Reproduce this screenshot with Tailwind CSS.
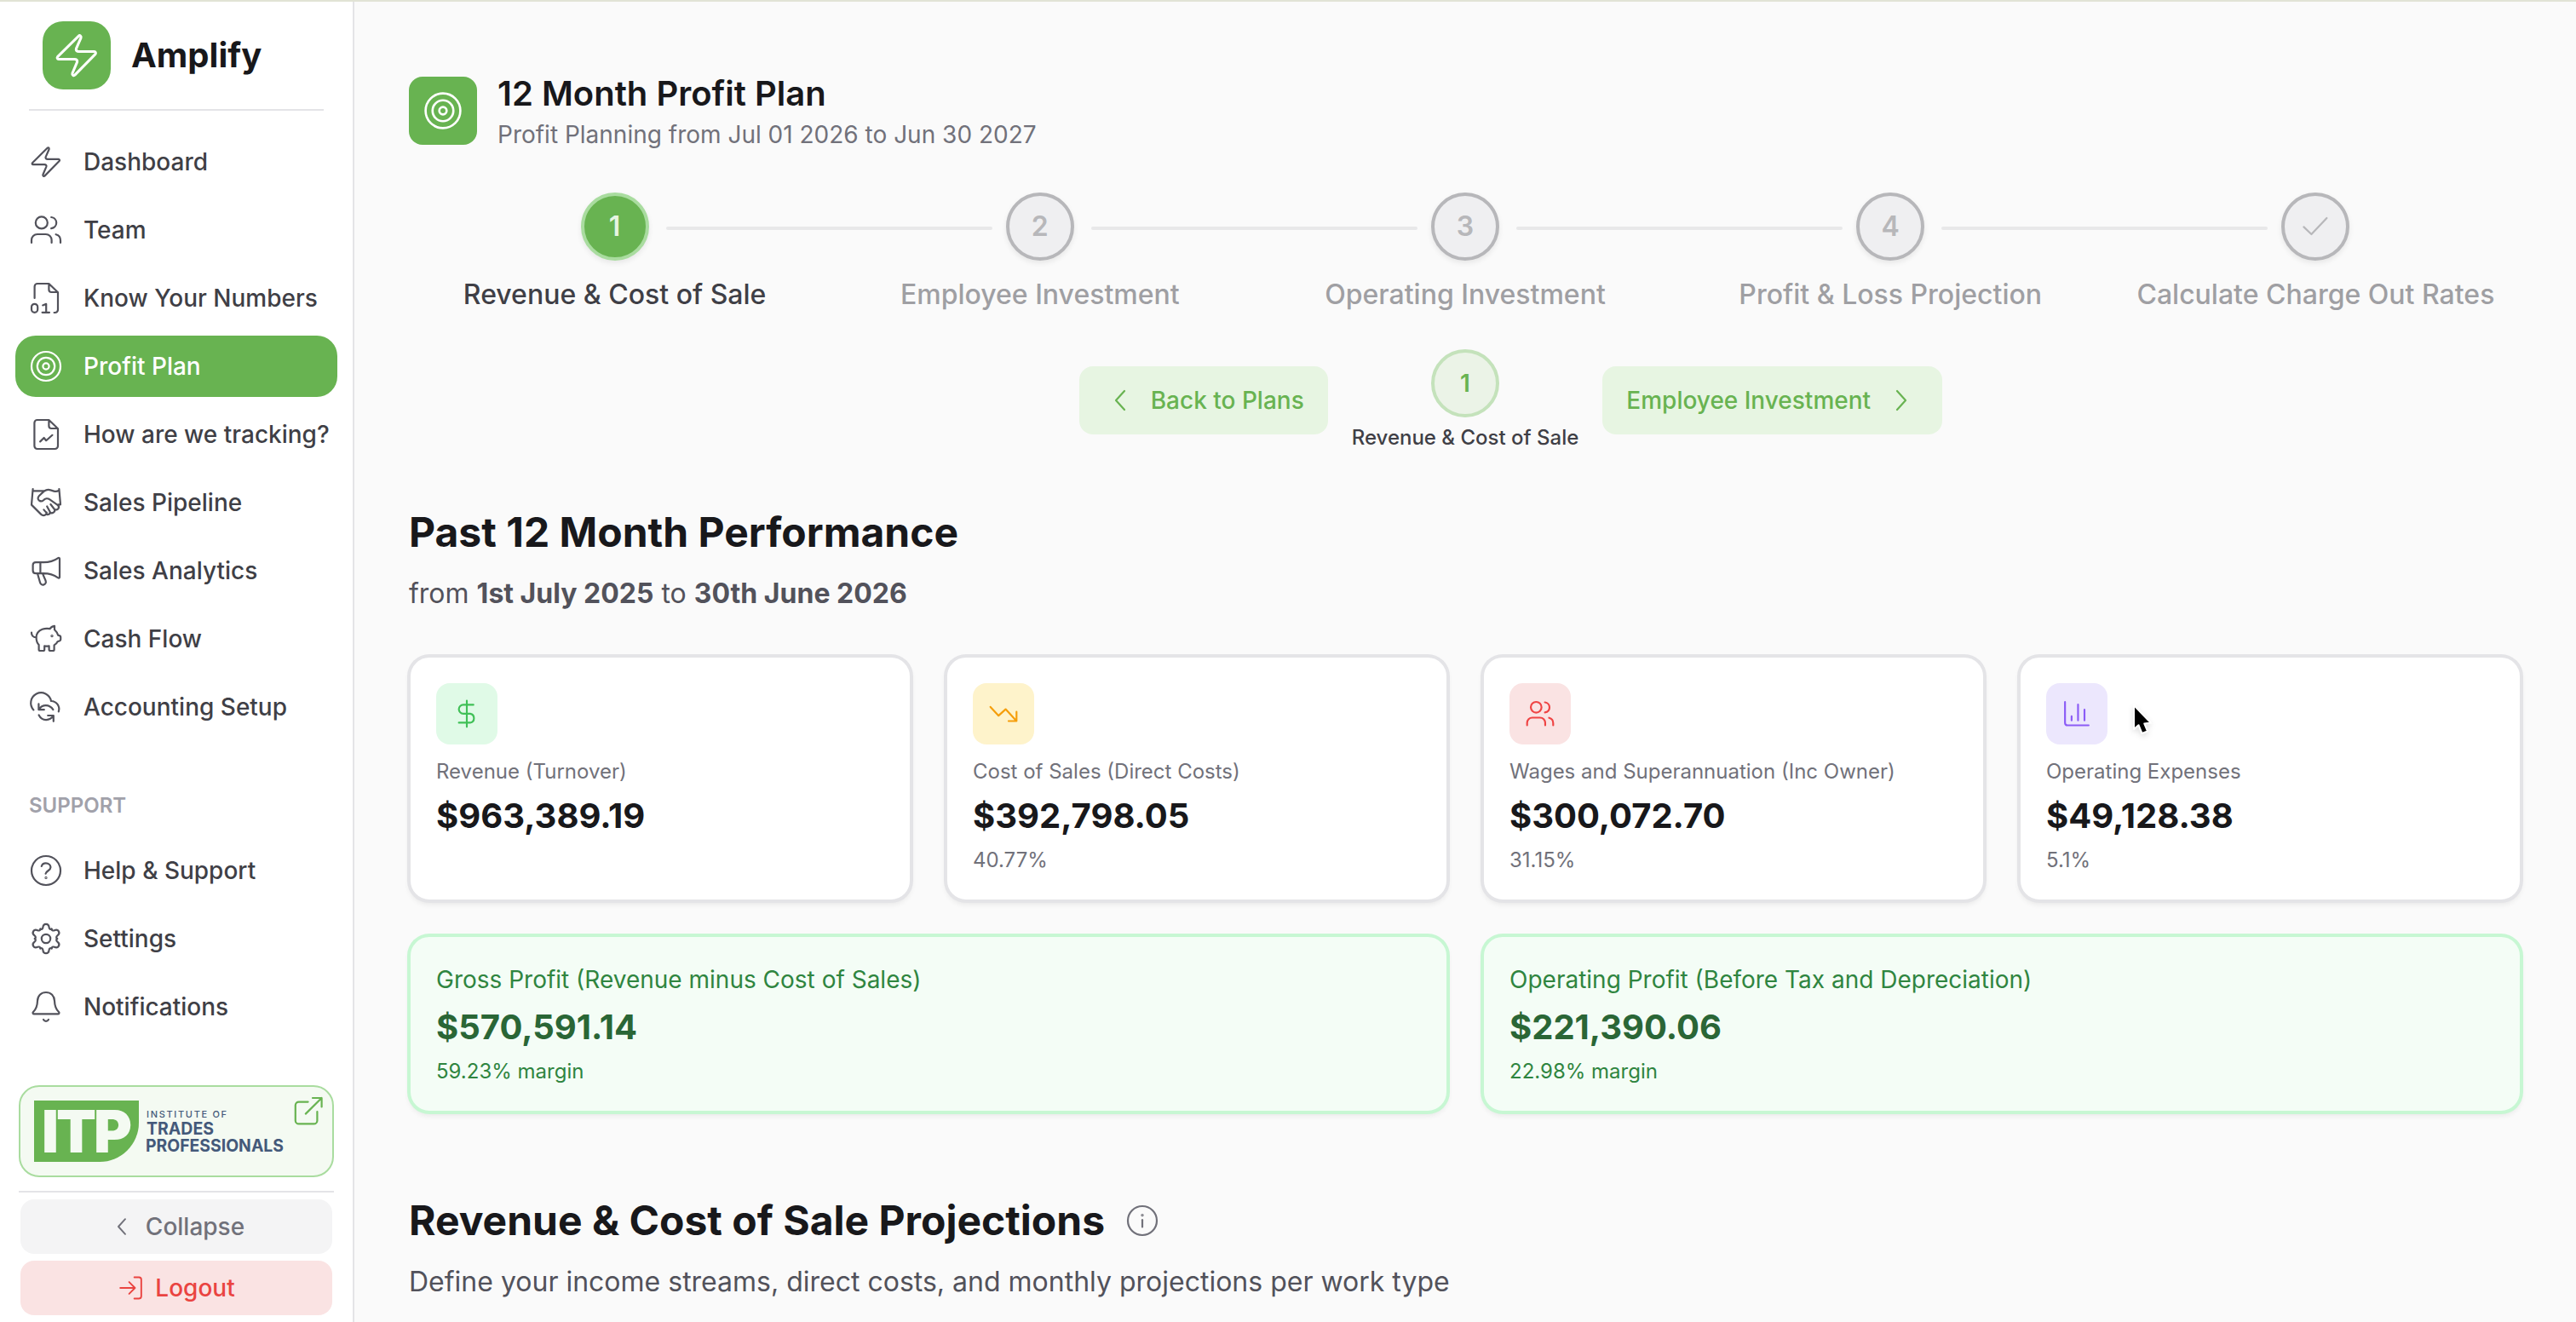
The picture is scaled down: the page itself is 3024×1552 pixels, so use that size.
<!DOCTYPE html>
<html lang="en">
<head>
    <meta charset="UTF-8">
    <meta name="viewport" content="width=device-width, initial-scale=1.0">
    <title>Amplify - 12 Month Profit Plan</title>
    <script src="https://cdn.jsdelivr.net/npm/@tailwindcss/browser@4"></script>
</head>
<body class="bg-[#fafafa] font-[Inter,sans-serif] text-[#18181b] w-[3024px] h-[1552px] overflow-hidden border-t-2 border-[#e1e3d5] flex">

    <!-- Icon sprite -->
    <svg class="hidden">
        <symbol id="bolt" viewBox="0 0 20 20"><path d="M10.8 1.9 2 10.6c-.35.4-.1 1 .4 1h6.7c.8 0 1.3.5 1.1 1.2L8.2 17.5c-.2.8.6 1.2 1.1.7l8.500-8.700c.4-.4.1-1.1-.4-1.1h-6.500c-.8 0-1.3-.5-1.100-1.200l2-4.600c.2-.8-.5-1.200-1-.7z"/></symbol>
        <symbol id="users" viewBox="0 0 20 20"><circle cx="7.4" cy="5.7" r="3.5"/><path d="M13.1 2.5c1.7.2 3 1.6 3 3.3S14.800 8.800 13.100 9.100M1.500 17.500v-1.600c0-1.900 1.500-3.400 3.400-3.400h5c1.900 0 3.400 1.500 3.400 3.400v1.600M15.800 12.600c1.600.4 2.700 1.800 2.700 3.500v1.400"/></symbol>
        <symbol id="file-digit" viewBox="0 0 20 20"><path d="M3.300 10V3.200c0-.9.7-1.700 1.700-1.700h6.700L17 6.600v10.200c0 .9-.7 1.700-1.700 1.700h-.5M11.700 1.500v3.500c0 .9.700 1.500 1.500 1.500H17M8.100 14.200l2-.8v5M7.800 18.400h4.200"/><rect x="1.500" y="13.400" width="3.600" height="5" rx="1.800"/></symbol>
        <symbol id="target" viewBox="0 0 20 20"><circle cx="10" cy="10" r="8.500"/><circle cx="10" cy="10" r="5.100"/><circle cx="10" cy="10" r="1.800"/></symbol>
        <symbol id="file-chart" viewBox="0 0 20 20"><path d="M3.200 3.200c0-.9.7-1.700 1.700-1.700h6.800L17 6.600v10.200c0 .9-.8 1.700-1.700 1.700H4.900c-1 0-1.700-.8-1.700-1.700zM11.700 1.500v3.500c0 .9.700 1.500 1.500 1.500H17M6.600 14.200l2.200-2.200 1.300 1.600 3.600-3.200"/></symbol>
        <symbol id="handshake" viewBox="0 0 20 20"><path d="M2.300 2l-.8 9.300 5.500 5.500c1 1 2.200 1 3 .1.300-.3.400-.7.400-1.100M17.700 2l.8 9.200h-1.300M2.400 3.200h6.500M17.600 2.800c-.9.700-2 .8-3 .5l-1.900-.6c-1.300-.5-2.700-.2-3.800.6L6 6c-1 1-.9 2.300.1 2.900.8.5 1.700.4 2.400-.3.9-1 2.500-1.200 3.700-.4l4.600 3.200c.8.6.9 1.500.4 2.200-.5.700-1.500.8-2.200.3.300.8 0 1.500-.6 1.900-.7.500-1.500.4-2.100-.1 0 .7-.5 1.200-1.100 1.300-.4.100-.8-.1-1-.3M8.700 14.200l1.700 2M10.600 12.200l1.900 3.500M12.700 11l2.300 3"/></symbol>
        <symbol id="megaphone" viewBox="0 0 20 20"><path d="M18 3v10.700c0 .5-.5.800-.9.500-2.600-1.800-5-2.600-8.600-2.600H4c-1 0-1.700-.7-1.700-1.700V6.800c0-1 .7-1.700 1.700-1.700h4.500c3.600 0 6-.6 8.600-2.500.4-.3.9 0 .9.400zM6.700 5.100v6.500M5 11.600l1.500 5.300c.3 1 1.200 1.600 2.200 1.300 1-.3 1.500-1.300 1.100-2.300L8 11.700"/></symbol>
        <symbol id="piggy" viewBox="0 0 20 20"><path d="M15 2.400c-1.300.2-2.200.8-2.700 1.700-1-.2-3.100-.2-4.500.3-2.100.8-3.500 2.600-3.500 4.900 0 1.900.5 3.200 1.500 4.200v2.700c0 .5.300.8.800.8h1.700c.5 0 .8-.3.800-.8v-2c.9.200 1.800.2 2.700 0v2c0 .5.300.8.800.8H14c.5 0 .8-.3.800-.8v-2.500c1-.6 1.700-1.300 2-2.100l1.300-.5c.3-.1.500-.4.500-.7V8.900c0-.3-.2-.6-.5-.7l-1-.3c-.2-1-.8-2.100-2.100-3.300zM1.500 6.300c-.1 1.500.9 2.900 2.700 2.900"/><circle cx="13.500" cy="8.300" r=".3"/></symbol>
        <symbol id="cloud-sync" viewBox="0 0 20 20"><path d="M2.700 11.700A6 6 0 1 1 13 6.500a4.700 4.700 0 0 1 4.400 6.200M5.700 8.200v3.400h3.200M5.800 11.500c2-3.200 6.200-3.300 8.400.1M14.400 18.400V15h-3.300M14.300 15.100c-2.100 3.300-6.600 3.300-8.500-.4"/></symbol>
        <symbol id="help" viewBox="0 0 20 20"><circle cx="10" cy="10" r="8.500"/><path d="M7.400 7.500c.3-1.100 1.300-1.800 2.500-1.800 1.600 0 2.800 1 2.800 2.400 0 1.900-2.600 2-2.900 3.700"/><circle cx="10" cy="14.200" r=".25"/></symbol>
        <symbol id="gear" viewBox="-10 -10 20 20">
            <g id="tooth"><path d="M-3.300-5.700C-2.500-5.300-1.900-5.800-1.800-6.700c.1-1.100.8-1.900 1.800-1.900s1.700.8 1.800 1.900c.1.900.7 1.400 1.500 1"/></g>
            <use href="#tooth" transform="rotate(60)"/><use href="#tooth" transform="rotate(120)"/><use href="#tooth" transform="rotate(180)"/><use href="#tooth" transform="rotate(240)"/><use href="#tooth" transform="rotate(300)"/>
            <circle r="2.600"/>
        </symbol>
        <symbol id="bell" viewBox="0 0 20 20"><path d="M10 1.500c-2.900 0-4.900 2.100-5 5-.1 3.300-.7 4.800-2.500 6.500-.5.500-.2 1.200.5 1.200h14c.7 0 1-.7.500-1.200-1.800-1.700-2.400-3.200-2.500-6.500-.1-2.900-2.100-5-5-5zM8.500 17.500c.7 1.200 2.300 1.200 3 0"/></symbol>
        <symbol id="external" viewBox="0 0 20 20"><path d="M9.800 4.800H4.400c-1.100 0-2 .9-2 2v8.900c0 1.100.9 2 2 2h8.800c1.100 0 2-.9 2-2v-5.200M8.400 11.800l9.400-9.300M12.500 2.500h5.300v5.200"/></symbol>
        <symbol id="chevron-left" viewBox="0 0 20 20"><path d="M12.500 4.500 7.500 10l5 5.500"/></symbol>
        <symbol id="chevron-right" viewBox="0 0 20 20"><path d="M7.500 4.500l5 5.500-5 5.500"/></symbol>
        <symbol id="login" viewBox="0 0 20 20"><path d="M2 10h10.600M8.500 5.700l4.300 4.300-4.300 4.300M12.300 2.200h3.400c1 0 1.700.7 1.700 1.700v12.200c0 1-.7 1.700-1.700 1.700h-3.400"/></symbol>
        <symbol id="check" viewBox="0 0 20 20"><path d="M3.200 10.200l4.500 4.300 9-9.500"/></symbol>
        <symbol id="dollar" viewBox="0 0 20 20"><path d="M14.300 4.100H7.700a2.900 2.900 0 0 0 0 5.800h4.500a3 3 0 0 1 0 5.900H4.800M10 1.500v17"/></symbol>
        <symbol id="trend-down" viewBox="0 0 20 20"><path d="M1.500 5.500l5.300 5.700 4.600-4.200 7.100 7.700M13.300 14.700h5.200v-6"/></symbol>
        <symbol id="chart" viewBox="0 0 20 20"><path d="M2.300 2.300v13.500c0 1 .7 1.700 1.700 1.700h13.700M6.600 11.600v2.700M10.800 4v10.300M15 7.300v7"/></symbol>
        <symbol id="info" viewBox="0 0 20 20"><circle cx="10" cy="10" r="8.500"/><path d="M10 9.600v4.100"/><circle cx="10" cy="6.800" r=".3"/></symbol>
    </svg>

    <!-- Sidebar -->
    <aside class="w-[416px] shrink-0 h-full bg-white border-r-2 border-[#e4e4e7] flex flex-col">
        <div class="ml-[34px] w-[346px] h-[128px] border-b-2 border-[#e4e4e7] pl-4 pt-[23px] flex items-start gap-6">
            <div class="size-20 rounded-3xl bg-[#68b351] text-white flex items-center justify-center">
                <svg class="size-14 fill-none stroke-current stroke-[1.1] [stroke-linecap:round] [stroke-linejoin:round]"><use href="#bolt"/></svg>
            </div>
            <span class="text-[40px] leading-[80px] font-bold">Amplify</span>
        </div>

        <nav class="ml-[18px] w-[378px] mt-6 flex flex-col gap-2 text-[28px] font-medium text-[#3f3f46] whitespace-nowrap [&_svg]:size-10 [&_svg]:shrink-0 [&_svg]:fill-none [&_svg]:stroke-current [&_svg]:stroke-[1.1] [&_svg]:[stroke-linecap:round] [&_svg]:[stroke-linejoin:round]">
            <a class="h-[72px] px-4 flex items-center gap-6"><svg class="text-[#52525b]"><use href="#bolt"/></svg>Dashboard</a>
            <a class="h-[72px] px-4 flex items-center gap-6"><svg class="text-[#52525b]"><use href="#users"/></svg>Team</a>
            <a class="h-[72px] px-4 flex items-center gap-6"><svg class="text-[#52525b]"><use href="#file-digit"/></svg>Know Your Numbers</a>
            <a class="h-[72px] px-4 flex items-center gap-6 rounded-3xl bg-[#68b351] text-white"><svg><use href="#target"/></svg>Profit Plan</a>
            <a class="h-[72px] px-4 flex items-center gap-6"><svg class="text-[#52525b]"><use href="#file-chart"/></svg>How are we tracking?</a>
            <a class="h-[72px] px-4 flex items-center gap-6"><svg class="text-[#52525b]"><use href="#handshake"/></svg>Sales Pipeline</a>
            <a class="h-[72px] px-4 flex items-center gap-6"><svg class="text-[#52525b]"><use href="#megaphone"/></svg>Sales Analytics</a>
            <a class="h-[72px] px-4 flex items-center gap-6"><svg class="text-[#52525b]"><use href="#piggy"/></svg>Cash Flow</a>
            <a class="h-[72px] px-4 flex items-center gap-6"><svg class="text-[#52525b]"><use href="#cloud-sync"/></svg>Accounting Setup</a>
            <h3 class="mt-14 mb-4 px-4 text-[24px] leading-8 font-semibold text-[#a1a1aa]">SUPPORT</h3>
            <a class="h-[72px] px-4 flex items-center gap-6"><svg class="text-[#52525b]"><use href="#help"/></svg>Help &amp; Support</a>
            <a class="h-[72px] px-4 flex items-center gap-6"><svg class="text-[#52525b]"><use href="#gear"/></svg>Settings</a>
            <a class="h-[72px] px-4 flex items-center gap-6"><svg class="text-[#52525b]"><use href="#bell"/></svg>Notifications</a>
        </nav>

        <div class="mx-[22px] w-[370px] mt-auto pb-2">
            <div class="relative h-[108px] rounded-3xl border-2 border-[#a9dc9f] bg-[#f4faf2] pl-4 flex items-center">
                <div class="w-[123px] h-[72px] bg-[#68b351] rounded-br-[46px]">
                    <svg class="w-[123px] h-[72px] overflow-visible fill-[#f4faf2]"><text x="9" y="61" textLength="103" lengthAdjust="spacingAndGlyphs" class="text-[69px] font-black tracking-[-3px]">ITP</text></svg>
                </div>
                <svg class="w-[170px] h-[72px] ml-2 overflow-visible fill-[#44597a]">
                    <text x="1" y="19.500" textLength="94" class="text-[11px] font-medium">INSTITUTE OF</text>
                    <text x="1" y="40" textLength="79" lengthAdjust="spacingAndGlyphs" class="text-[20px] font-bold">TRADES</text>
                    <text x="0" y="60" textLength="162" lengthAdjust="spacingAndGlyphs" class="text-[20px] font-bold">PROFESSIONALS</text>
                </svg>
                <svg class="absolute right-2 top-2 size-10 fill-none stroke-[#68b351] stroke-[1.1] [stroke-linecap:round] [stroke-linejoin:round]"><use href="#external"/></svg>
            </div>
            <div class="mt-4 h-0.5 bg-[#e4e4e7]"></div>
            <div class="mt-2 mx-0.5 h-16 rounded-2xl bg-[#f4f4f5] text-[#71717a] text-[28px] font-medium flex items-center justify-center gap-3">
                <svg class="size-8 fill-none stroke-current stroke-[1.2] [stroke-linecap:round] [stroke-linejoin:round]"><use href="#chevron-left"/></svg>Collapse
            </div>
            <div class="mt-2 mx-0.5 h-16 rounded-2xl bg-[#fae3e3] text-[#ea4441] text-[28px] font-medium flex items-center justify-center gap-3">
                <svg class="size-8 fill-none stroke-current stroke-[1.2] [stroke-linecap:round] [stroke-linejoin:round]"><use href="#login"/></svg>Logout
            </div>
        </div>
    </aside>

    <!-- Main content -->
    <main class="w-[2608px] px-16 pt-[86px] flex flex-col">
        <header class="flex gap-6">
            <div class="mt-0.5 size-20 rounded-2xl bg-[#68b351] text-white flex items-center justify-center">
                <svg class="size-12 fill-none stroke-current stroke-[1.1]"><use href="#target"/></svg>
            </div>
            <div class="-mt-1">
                <h1 class="text-[40px] leading-[52px] font-semibold">12 Month Profit Plan</h1>
                <p class="text-[28px] leading-10 mt-0.5 text-[#71717a]">Profit Planning from Jul 01 2026 to Jun 30 2027</p>
            </div>
        </header>

        <!-- Stepper -->
        <div class="mt-12 px-[201.600px] flex items-center text-[32px] font-semibold text-[#b7b7ba]">
            <div class="size-20 rounded-full border-4 border-[#a9dc9f] bg-[#68b351] text-[#e7f5e2] shadow-[0_3px_6px_rgba(0,0,0,0.08)] flex items-center justify-center">1</div>
            <div class="flex-1 h-1 ml-5 mr-4 mt-1 rounded-full bg-[#e8e8e9]"></div>
            <div class="size-20 rounded-full border-4 border-[#b7b7ba] bg-[#efeff1] shadow-[0_3px_6px_rgba(0,0,0,0.08)] flex items-center justify-center">2</div>
            <div class="flex-1 h-1 ml-5 mr-4 mt-1 rounded-full bg-[#e8e8e9]"></div>
            <div class="size-20 rounded-full border-4 border-[#b7b7ba] bg-[#efeff1] shadow-[0_3px_6px_rgba(0,0,0,0.08)] flex items-center justify-center">3</div>
            <div class="flex-1 h-1 ml-5 mr-4 mt-1 rounded-full bg-[#e8e8e9]"></div>
            <div class="size-20 rounded-full border-4 border-[#b7b7ba] bg-[#efeff1] shadow-[0_3px_6px_rgba(0,0,0,0.08)] flex items-center justify-center">4</div>
            <div class="flex-1 h-1 ml-5 mr-4 mt-1 rounded-full bg-[#e8e8e9]"></div>
            <div class="size-20 rounded-full border-4 border-[#b7b7ba] bg-[#efeff1] shadow-[0_3px_6px_rgba(0,0,0,0.08)] flex items-center justify-center">
                <svg class="size-10 fill-none stroke-current stroke-[1.1] [stroke-linecap:round] [stroke-linejoin:round]"><use href="#check"/></svg>
            </div>
        </div>
        <div class="mt-4 grid grid-cols-5 gap-4 text-center text-[32px] leading-[48px] font-medium text-[#9f9fa3]">
            <span class="text-[#3f3f46]">Revenue &amp; Cost of Sale</span>
            <span>Employee Investment</span>
            <span>Operating Investment</span>
            <span>Profit &amp; Loss Projection</span>
            <span>Calculate Charge Out Rates</span>
        </div>

        <!-- Step navigation -->
        <div class="mt-10 h-[120px] grid grid-cols-[1fr_auto_1fr] items-center gap-7 text-[28px] font-medium text-[#68b351]">
            <div class="justify-self-end h-20 w-[292px] pl-7 rounded-2xl bg-[#e7f5e2] flex items-center gap-4">
                <svg class="size-10 fill-none stroke-current stroke-[1.1] [stroke-linecap:round] [stroke-linejoin:round]"><use href="#chevron-left"/></svg>Back to Plans
            </div>
            <div class="flex flex-col items-center">
                <div class="size-20 rounded-full border-4 border-[#c4e2bb] bg-[#ebf3e7] font-semibold flex items-center justify-center">1</div>
                <span class="mt-2 text-[24px] leading-8 text-[#3f3f46]">Revenue &amp; Cost of Sale</span>
            </div>
            <div class="justify-self-start h-20 w-[399px] pl-7 rounded-2xl bg-[#e7f5e2] flex items-center gap-4">
                Employee Investment<svg class="size-10 fill-none stroke-current stroke-[1.1] [stroke-linecap:round] [stroke-linejoin:round]"><use href="#chevron-right"/></svg>
            </div>
        </div>

        <!-- Past performance -->
        <h2 class="mt-[63px] text-[48px] leading-[64px] font-bold">Past 12 Month Performance</h2>
        <p class="mt-4 text-[32px] leading-[48px] text-[#52525b]">from <b class="font-bold">1st July 2025</b> to <b class="font-bold">30th June 2026</b></p>

        <div class="mt-[49px] grid grid-cols-4 gap-10">
            <div class="h-[288px] p-[30px] rounded-3xl bg-white border-2 border-[#e4e4e7] ring-2 ring-[#e4e4e7] shadow-[0_4px_6px_rgba(0,0,0,0.07)]">
                <div class="size-[72px] rounded-2xl bg-[#e0fae7] text-[#40c057] flex items-center justify-center">
                    <svg class="size-9 fill-none stroke-current stroke-[1.2] [stroke-linecap:round] [stroke-linejoin:round]"><use href="#dollar"/></svg>
                </div>
                <p class="mt-4 text-[24px] leading-8 text-[#71717a]">Revenue (Turnover)</p>
                <p class="mt-2 text-[40px] leading-[56px] font-bold">$963,389.19</p>
            </div>
            <div class="h-[288px] p-[30px] rounded-3xl bg-white border-2 border-[#e4e4e7] ring-2 ring-[#e4e4e7] shadow-[0_4px_6px_rgba(0,0,0,0.07)]">
                <div class="size-[72px] rounded-2xl bg-[#fef3cb] text-[#f59e0b] flex items-center justify-center">
                    <svg class="size-9 fill-none stroke-current stroke-[1.2] [stroke-linecap:round] [stroke-linejoin:round]"><use href="#trend-down"/></svg>
                </div>
                <p class="mt-4 text-[24px] leading-8 text-[#71717a]">Cost of Sales (Direct Costs)</p>
                <p class="mt-2 text-[40px] leading-[56px] font-bold">$392,798.05</p>
                <p class="mt-2 text-[24px] leading-8 text-[#71717a]">40.77%</p>
            </div>
            <div class="h-[288px] p-[30px] rounded-3xl bg-white border-2 border-[#e4e4e7] ring-2 ring-[#e4e4e7] shadow-[0_4px_6px_rgba(0,0,0,0.07)]">
                <div class="size-[72px] rounded-2xl bg-[#fae3e3] text-[#ef4444] flex items-center justify-center">
                    <svg class="size-9 fill-none stroke-current stroke-[1.2] [stroke-linecap:round] [stroke-linejoin:round]"><use href="#users"/></svg>
                </div>
                <p class="mt-4 text-[24px] leading-8 text-[#71717a]">Wages and Superannuation (Inc Owner)</p>
                <p class="mt-2 text-[40px] leading-[56px] font-bold">$300,072.70</p>
                <p class="mt-2 text-[24px] leading-8 text-[#71717a]">31.15%</p>
            </div>
            <div class="relative h-[288px] p-[30px] rounded-3xl bg-white border-2 border-[#e4e4e7] ring-2 ring-[#e4e4e7] shadow-[0_4px_6px_rgba(0,0,0,0.07)]">
                <div class="size-[72px] rounded-2xl bg-[#ece7fd] text-[#8b5cf6] flex items-center justify-center">
                    <svg class="size-9 fill-none stroke-current stroke-[1.2] [stroke-linecap:round] [stroke-linejoin:round]"><use href="#chart"/></svg>
                </div>
                <p class="mt-4 text-[24px] leading-8 text-[#71717a]">Operating Expenses</p>
                <p class="mt-2 text-[40px] leading-[56px] font-bold">$49,128.38</p>
                <p class="mt-2 text-[24px] leading-8 text-[#71717a]">5.1%</p>
                <!-- Mouse pointer -->
                <svg class="absolute left-[130px] top-[54px] w-8 h-11 drop-shadow-md" viewBox="0 0 32 44"><path d="M3 2v28l5.500-4.800L12.500 35l6.500-2.600L15.300 23.500l7.500-.9z" fill="#000" stroke="#fff" stroke-width="2" stroke-linejoin="round"/></svg>
            </div>
        </div>

        <div class="mt-10 grid grid-cols-2 gap-10">
            <div class="h-[208px] p-[30px] rounded-3xl bg-[#f4fdf6] border-2 border-[#c7f7d3] ring-2 ring-[#c7f7d3] shadow-[0_4px_6px_rgba(0,0,0,0.07)] text-[#2f8540]">
                <p class="text-[28px] leading-10">Gross Profit (Revenue minus Cost of Sales)</p>
                <p class="mt-2 text-[40px] leading-[56px] font-bold text-[#2a6636]">$570,591.14</p>
                <p class="mt-2 text-[24px] leading-8">59.23% margin</p>
            </div>
            <div class="h-[208px] p-[30px] rounded-3xl bg-[#f4fdf6] border-2 border-[#c7f7d3] ring-2 ring-[#c7f7d3] shadow-[0_4px_6px_rgba(0,0,0,0.07)] text-[#2f8540]">
                <p class="text-[28px] leading-10">Operating Profit (Before Tax and Depreciation)</p>
                <p class="mt-2 text-[40px] leading-[56px] font-bold text-[#2a6636]">$221,390.06</p>
                <p class="mt-2 text-[24px] leading-8">22.98% margin</p>
            </div>
        </div>

        <!-- Projections -->
        <div class="mt-[95px] flex items-center gap-6">
            <h2 class="text-[48px] leading-[64px] font-bold">Revenue &amp; Cost of Sale Projections</h2>
            <svg class="size-10 fill-none stroke-[#71717a] stroke-[1.1] [stroke-linecap:round]"><use href="#info"/></svg>
        </div>
        <p class="mt-4 text-[32px] leading-[48px] text-[#52525b]">Define your income streams, direct costs, and monthly projections per work type</p>
    </main>
</body>
</html>
